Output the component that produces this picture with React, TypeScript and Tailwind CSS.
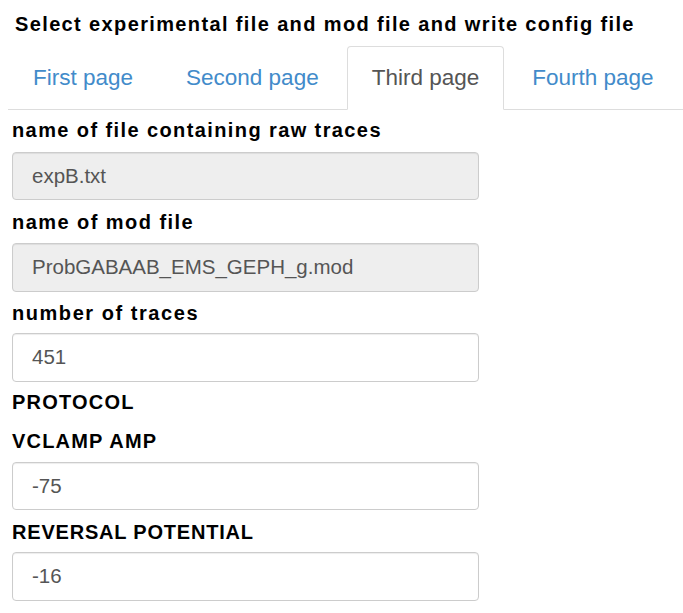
import React from "react";

const font = { fontFamily: '"Liberation Sans", Arial, sans-serif' };

function Label({ children, className }: { children: React.ReactNode; className: string }) {
  return (
    <div className={"text-[20px] leading-[28px] font-bold text-black " + className}>{children}</div>
  );
}

function Field({ value, disabled, className }: { value: string; disabled?: boolean; className: string }) {
  return (
    <div
      className={
        "w-[467px] flex items-center pl-[19px] border border-[#cccccc] rounded-[4px] shadow-[inset_0_1px_1px_rgba(0,0,0,0.075)] text-[20.5px] text-[#555555] " +
        (disabled ? "bg-[#eeeeee] " : "bg-white ") +
        className
      }
    >
      {value}
    </div>
  );
}

export default function App() {
  const tabs = ["First page", "Second page", "Third page", "Fourth page"];
  return (
    <div className="w-[683px] h-[613px] bg-white overflow-hidden" style={font}>
      <div className="pt-[10px] pl-[15px] text-[20px] leading-[28px] font-bold text-black tracking-[1.37px] whitespace-nowrap">
        Select experimental file and mod file and write config file
      </div>
      <ul className="mt-[8px] ml-[8px] flex border-b border-[#dddddd]">
        {tabs.map((t, i) => {
          const active = i === 2;
          return (
            <li key={t} className="-mb-px mr-[3px]">
              <div
                className={
                  "px-6 pt-[15px] pb-[16px] text-[22.5px] leading-[31px] rounded-t-[4px] border whitespace-nowrap " +
                  (active
                    ? "border-[#dddddd] border-b-transparent bg-white text-[#555555]"
                    : "border-transparent text-[#428bca]")
                }
              >
                {t}
              </div>
            </li>
          );
        })}
      </ul>
      <div className="px-3">
        <Label className="mt-[6px] mb-[8px] tracking-[1.4px]">name of file containing raw traces</Label>
        <Field value="expB.txt" disabled className="h-[48px]" />
        <Label className="mt-[8px] mb-[7px] tracking-[1.45px]">name of mod file</Label>
        <Field value="ProbGABAAB_EMS_GEPH_g.mod" disabled className="h-[49px]" />
        <Label className="mt-[7px] mb-[6px] tracking-[1.55px]">number of traces</Label>
        <Field value="451" className="h-[49px]" />
        <Label className="mt-[6px] tracking-[1.2px]">PROTOCOL</Label>
        <Label className="mt-[11px] mb-[7px] tracking-[1.2px]">VCLAMP AMP</Label>
        <Field value="-75" className="h-[48px]" />
        <Label className="mt-[8px] mb-[6px] tracking-[0.8px]">REVERSAL POTENTIAL</Label>
        <Field value="-16" className="h-[49px]" />
      </div>
    </div>
  );
}
